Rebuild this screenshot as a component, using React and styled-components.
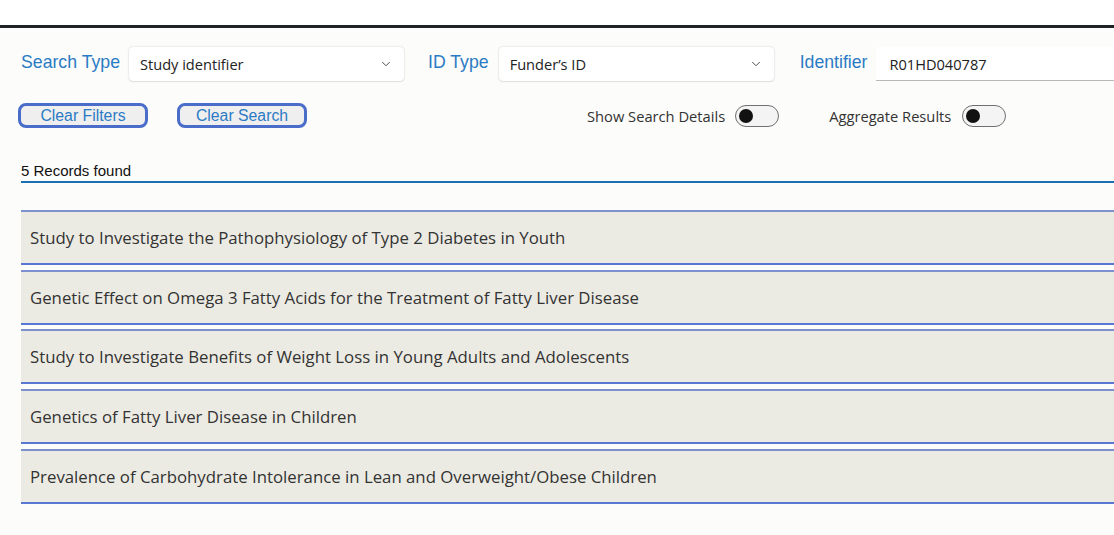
import React from "react";
import styled, { createGlobalStyle } from "styled-components";
import { ChevronDown } from "lucide-react";

const Global = createGlobalStyle`
  html, body { margin: 0; padding: 0; background: #ffffff; overflow: hidden; }
  body { width: 1114px; height: 535px; }
`;

const Page = styled.div`
  width: 1114px;
  height: 535px;
  display: flex;
  flex-direction: column;
  background: #ffffff;
  overflow: hidden;
`;

const TopSpace = styled.div`
  height: 25px;
  flex: none;
  background: #ffffff;
  border-bottom: 3px solid #1f2327;
`;

const Main = styled.div`
  flex: 1;
  background: #fcfcfa;
  padding: 19px 0 0 21px;
  display: flex;
  flex-direction: column;
  width: 1200px;
`;

const FilterRow = styled.div`
  display: flex;
  align-items: center;
  height: 34px;
`;

const Field = styled.div`
  display: flex;
  align-items: center;
  gap: ${(p) => p.$gap || 9}px;
  margin-right: ${(p) => p.$after || 0}px;
`;

const Label = styled.span`
  font-family: "Liberation Sans", Arial, sans-serif;
  font-size: 17.7px;
  color: #2b7bc4;
  white-space: nowrap;
  margin-bottom: 4px;
`;

const Select = styled.div`
  width: 275px;
  height: 34px;
  box-sizing: border-box;
  display: flex;
  align-items: center;
  justify-content: space-between;
  padding: 0 11px 0 11px;
  background: #ffffff;
  border-radius: 4px;
  box-shadow: 0 0 2px rgba(0, 0, 0, 0.22), 0 1px 1px rgba(0, 0, 0, 0.06);
  font-family: "Open Sans", "Noto Sans", sans-serif;
  font-size: 14.6px;
  color: #222;
  svg { color: #444; }
`;

const Input = styled.div`
  width: 260px;
  height: 34px;
  box-sizing: border-box;
  display: flex;
  align-items: center;
  padding-left: 13px;
  background: #ffffff;
  border-bottom: 1.5px solid #b9b9b9;
  font-family: "Open Sans", "Noto Sans", sans-serif;
  font-size: 14.6px;
  color: #222;
`;

const ActionRow = styled.div`
  display: flex;
  align-items: center;
  margin-top: 22px;
  height: 25px;
  margin-left: -3px;
`;

const Button = styled.button`
  width: 130px;
  height: 25px;
  box-sizing: border-box;
  border: 3px solid #4a6dca;
  border-radius: 8px;
  background: #efefef;
  font-family: "Liberation Sans", Arial, sans-serif;
  font-size: 15.8px;
  color: #2b7bc4;
  padding: 0;
  margin-right: ${(p) => p.$after || 0}px;
  line-height: 1;
`;

const ToggleGroup = styled.div`
  display: flex;
  align-items: center;
  gap: ${(p) => p.$gap || 10}px;
  margin-left: ${(p) => p.$left || 0}px;
`;

const ToggleLabel = styled.span`
  font-family: "Open Sans", "Noto Sans", sans-serif;
  font-size: 14.7px;
  color: #333;
  white-space: nowrap;
`;

const Switch = styled.div`
  width: 44px;
  height: 22px;
  box-sizing: border-box;
  border: 1.5px solid #6f6f6f;
  border-radius: 11px;
  background: #f4f4f4;
  display: flex;
  align-items: center;
  padding-left: 3px;
`;

const Knob = styled.div`
  width: 14px;
  height: 14px;
  border-radius: 50%;
  background: #111;
`;

const Count = styled.div`
  margin-top: 34px;
  font-family: "Liberation Sans", Arial, sans-serif;
  font-size: 15px;
  color: #111;
  line-height: 18px;
  padding-bottom: 1px;
  border-bottom: 2px solid #1b70b2;
`;

const List = styled.div`
  margin-top: 27px;
  display: flex;
  flex-direction: column;
  gap: 4.7px;
`;

const Row = styled.div`
  height: 55px;
  box-sizing: border-box;
  border-top: 2px solid #7d91cf;
  border-bottom: 2px solid #5878d4;
  background: #ecebe3;
  display: flex;
  align-items: center;
  padding-left: 9px;
  font-family: "Open Sans", "Noto Sans", sans-serif;
  font-size: 16.8px;
  color: #333;
`;

const titles = [
  "Study to Investigate the Pathophysiology of Type 2 Diabetes in Youth",
  "Genetic Effect on Omega 3 Fatty Acids for the Treatment of Fatty Liver Disease",
  "Study to Investigate Benefits of Weight Loss in Young Adults and Adolescents",
  "Genetics of Fatty Liver Disease in Children",
  "Prevalence of Carbohydrate Intolerance in Lean and Overweight/Obese Children",
];

export default function App() {
  return (
    <Page>
      <Global />
      <TopSpace />
      <Main>
        <FilterRow>
          <Field $after={24}>
            <Label>Search Type</Label>
            <Select>
              <span>Study identifier</span>
              <ChevronDown size={14} strokeWidth={1.6} />
            </Select>
          </Field>
          <Field $after={26} $gap={10}>
            <Label>ID Type</Label>
            <Select>
              <span>Funder’s ID</span>
              <ChevronDown size={14} strokeWidth={1.6} />
            </Select>
          </Field>
          <Field>
            <Label>Identifier</Label>
            <Input>R01HD040787</Input>
          </Field>
        </FilterRow>
        <ActionRow>
          <Button $after={29}>Clear Filters</Button>
          <Button>Clear Search</Button>
          <ToggleGroup $left={280}>
            <ToggleLabel>Show Search Details</ToggleLabel>
            <Switch><Knob /></Switch>
          </ToggleGroup>
          <ToggleGroup $left={50} $gap={11}>
            <ToggleLabel>Aggregate Results</ToggleLabel>
            <Switch><Knob /></Switch>
          </ToggleGroup>
        </ActionRow>
        <Count>5 Records found</Count>
        <List>
          {titles.map((t) => (
            <Row key={t}>{t}</Row>
          ))}
        </List>
      </Main>
    </Page>
  );
}
